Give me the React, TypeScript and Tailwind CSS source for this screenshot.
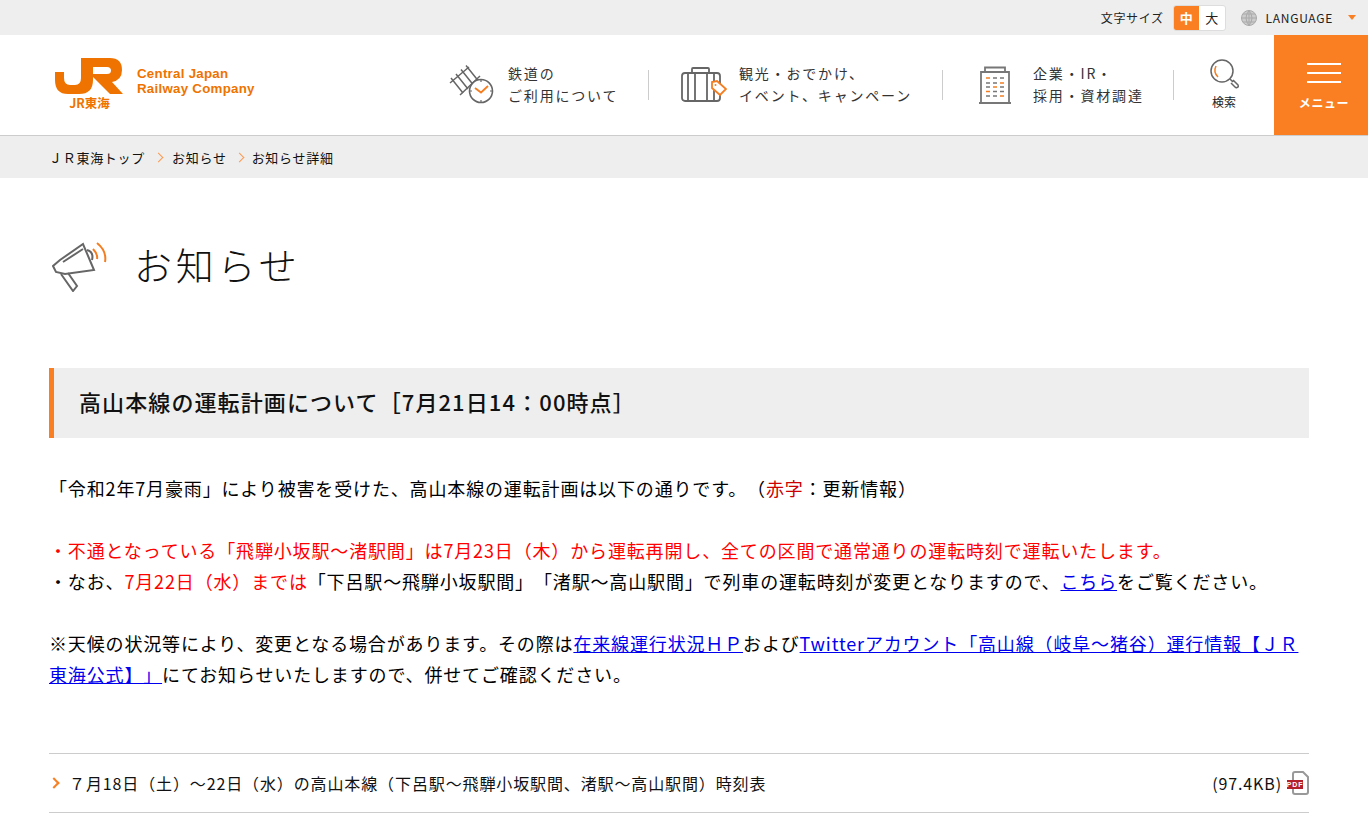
import React from 'react';

const TrainIcon = () => (
  <svg width="46" height="40" viewBox="0 0 46 40" fill="none" strokeWidth="1.5" stroke="#666">
    <path d="M1 18 L20 2 M11 30 L31 11" />
    <path d="M2 13 L14 28 M7 9 L19 24 M12 4.5 L24 19.5 M17 .5 L29 15.5" />
    <circle cx="32" cy="26" r="11.5" fill="#fff" strokeWidth="1.6" />
    <path d="M32 17 V15 M32 37 V35 M21 26 H23 M41 26 H43" strokeWidth="1.2" />
    <path d="M26 23 L32 27.5 L39 21" stroke="#f47d20" strokeWidth="1.8" />
  </svg>
);

const BagIcon = () => (
  <svg width="46" height="36" viewBox="0 0 46 36" fill="none" stroke="#666" strokeWidth="1.8">
    <path d="M11 6 V2 Q11 1 12 1 H27 Q28 1 28 2 V6" />
    <rect x="1" y="6" width="38" height="28" rx="3" />
    <path d="M7 6 V34 M14 6 V34 M26 6 V34 M33 6 V34" />
    <path d="M36 14 L45 22 L39 28 L31 21 L31 15 Z" fill="#fff" stroke="#f47d20" />
    <circle cx="34.5" cy="18" r="1" fill="#f47d20" stroke="none" />
  </svg>
);

const BuildingIcon = () => (
  <svg width="34" height="38" viewBox="0 0 34 38" fill="none">
    <path d="M7 6 V1.5 H27 V6 M3 37 V6 H31 V37 M1 37 H33" stroke="#777" strokeWidth="1.8" />
    <path d="M8 12 H12 M22 17 H26 M15 21 H19 M8 25.5 H12 M22 30 H26" stroke="#f47d20" strokeWidth="1.6" />
    <path d="M15 12 H19 M22 12 H26 M8 17 H12 M15 17 H19 M8 21 H12 M22 21 H26 M15 25.5 H19 M22 25.5 H26 M8 30 H12 M15 30 H19" stroke="#777" strokeWidth="1.6" />
  </svg>
);

const SearchIcon = () => (
  <svg width="30" height="30" viewBox="0 0 30 30" fill="none">
    <circle cx="12" cy="12" r="11" stroke="#666" strokeWidth="1.5" />
    <path d="M6 7 Q3 13 8 18" stroke="#f47d20" strokeWidth="1.5" />
    <path d="M20 20 L23 23 M23 21 L28 26 Q29 28 27 28.5 Q26 29 25 28 L21 24" stroke="#666" strokeWidth="1.5" />
  </svg>
);

const MegaphoneIcon = () => (
  <svg width="56" height="50" viewBox="0 0 56 50" fill="none" stroke="#666" strokeWidth="2">
    <path d="M1 24 L4 30 L13 32 L42 28 L31 2 L8 18 Z" fill="#fff" />
    <path d="M11 20 L31 7 M35 8 Q42 10 40 18" />
    <path d="M9 32 L21 49 L25 44 L16 31" />
    <path d="M41 7 Q46 12 45 17" stroke="#f47d20" />
    <path d="M45 1 Q55 9 53 20" stroke="#f47d20" />
  </svg>
);

const LogoMark = () => (
  <svg width="69" height="38" viewBox="0 0 69 38">
    <path
      fillRule="evenodd"
      fill="#ef7300"
      d="M26 0 H55 Q67 0 67 12 Q67 22 57 24 L68 36 H55 L38 19 V22 Q38 36 24 36 H13 Q0 36 0 22 V14 H9 V20 Q9 27 15 27 H20 Q26 27 26 20 Z M38 9 V16 H52 Q56 16 56 12.5 Q56 9 52 9 Z"
    />
  </svg>
);

const PdfIcon = () => (
  <svg width="22" height="24" viewBox="0 0 22 24" fill="none">
    <path d="M6 9 V3 Q6 1 8 1 H16 L21 6 V21 Q21 23 19 23 H8 Q6 23 6 21 V18" stroke="#999" strokeWidth="2" />
    <rect x="0" y="9" width="16" height="9" fill="#b3202a" />
    <text x="8" y="16" fontSize="7" fontWeight="700" fill="#fff" textAnchor="middle" fontFamily="Liberation Sans">PDF</text>
  </svg>
);

const navLabel = 'text-[14px] leading-[22px] tracking-[0.13em] text-[#333] -mt-[2px]';
const link = 'text-[#0000ee] underline';

const App: React.FC = () => {
  return (
    <div className="bg-white text-[#222] font-['Noto_Sans_CJK_JP','Noto_Sans',sans-serif] [text-spacing-trim:space-all] min-h-screen overflow-hidden">
      {/* top bar */}
      <div className="h-[35px] bg-[#eeeeee] flex items-center justify-end text-[12px] text-[#222]">
        <span className="tracking-[0.05em]">文字サイズ</span>
        <div className="ml-[9px] flex h-[26px] w-[53px] rounded-[3px] overflow-hidden border border-[#ddd] bg-white text-[13px]">
          <span className="flex-1 bg-[#fa7f22] text-white font-bold flex items-center justify-center">中</span>
          <span className="flex-1 flex items-center justify-center">大</span>
        </div>
        <svg className="ml-[15px]" width="16" height="16" viewBox="0 0 16 16" fill="none" stroke="#aaa">
          <circle cx="8" cy="8" r="7.5" fill="#ccc" />
          <path d="M0 8 H16 M8 0 V16 M2 4 H14 M2 12 H14 M8 .5 Q2 8 8 15.5 M8 .5 Q14 8 8 15.5" />
        </svg>
        <span className="ml-[9px] text-[12px] tracking-[0.06em]">LANGUAGE</span>
        <span className="ml-[15px] mr-[12px] w-0 h-0 border-x-[4px] border-x-transparent border-t-[5px] border-t-[#fa7f22]" />
      </div>

      {/* header */}
      <header className="h-[101px] flex items-center border-b border-[#ccc]">
        <a className="ml-[55px] flex items-start">
          <div className="flex flex-col items-center -mt-[4px]">
            <LogoMark />
            <span className="text-[12.5px] leading-[13px] font-bold text-[#ef7300]">JR東海</span>
          </div>
          <div className="ml-[13px] mt-[4px] font-['Liberation_Sans',sans-serif] font-bold text-[13.3px] leading-[15px] text-[#ef7300] tracking-[0.02em]">
            Central Japan<br />Railway Company
          </div>
        </a>

        <nav className="ml-auto flex items-center h-full">
          <div className="flex items-center w-[199px]">
            <TrainIcon />
            <p className={`ml-[13px] ${navLabel}`}>鉄道の<br />ご利用について</p>
          </div>
          <div className="w-px h-[30px] bg-[#ccc]" />
          <div className="flex items-center w-[293px] pl-[32px]">
            <BagIcon />
            <p className={`ml-[12px] ${navLabel}`}>観光・おでかけ、<br />イベント、キャンペーン</p>
          </div>
          <div className="w-px h-[30px] bg-[#ccc]" />
          <div className="flex items-center w-[230px] pl-[35px]">
            <BuildingIcon />
            <p className={`ml-[21px] ${navLabel}`}>企業・IR・<br />採用・資材調達</p>
          </div>
          <div className="w-px h-[30px] bg-[#ccc]" />
          <div className="w-[100px] flex flex-col items-center -mt-[2px]">
            <span className="ml-[2px]"><SearchIcon /></span>
            <span className="text-[12px] leading-[16px] mt-[5px]">検索</span>
          </div>
          <div className="w-[94px] h-full bg-[#fa7f22] text-white flex flex-col items-center justify-center pl-[6px] pt-[3px]">
            <span className="w-[34px] h-[2px] bg-white" />
            <span className="w-[34px] h-[2px] bg-white mt-[7px]" />
            <span className="w-[34px] h-[2px] bg-white mt-[7px]" />
            <span className="text-[12px] leading-[16px] font-bold mt-[12px] tracking-[0.05em]">メニュー</span>
          </div>
        </nav>
      </header>

      {/* breadcrumb */}
      <div className="h-[42px] bg-[#eeeeee] flex items-center pl-[49px] pt-[1px] text-[13px] tracking-[0.055em] text-[#111]">
        <span>ＪＲ東海トップ</span>
        <span className="mx-[10px] w-[7px] h-[7px] border-t border-r border-[#fa9a50] rotate-45" />
        <span>お知らせ</span>
        <span className="mx-[9px] w-[7px] h-[7px] border-t border-r border-[#fa9a50] rotate-45" />
        <span>お知らせ詳細</span>
      </div>

      <main className="px-[49px] w-[1358px]">
        <div className="flex items-center h-[50px] mt-[64px] pl-[3px]">
          <MegaphoneIcon />
          <h1 className="ml-[26px] -mt-[8px] text-[38px] font-light tracking-[0.1em] text-[#111]">お知らせ</h1>
        </div>

        <h2 className="mt-[76px] h-[70px] flex items-center bg-[#eeeeee] border-l-[5px] border-[#fa7f22] pl-[25px] pb-[3px] text-[22px] font-medium tracking-[0.05em] text-[#111]">
          高山本線の運転計画について［7月21日14：00時点］
        </h2>

        <div className="mt-[35px] text-[18px] leading-[31px] tracking-[0.85px] text-[#000]">
          <p>「令和2年7月豪雨」により被害を受けた、高山本線の運転計画は以下の通りです。（<span className="text-[#cc0000]">赤字</span>：更新情報）</p>
          <p className="mt-[31px] text-[#ff0000]">・不通となっている「飛騨小坂駅～渚駅間」は7月23日（木）から運転再開し、全ての区間で通常通りの運転時刻で運転いたします。</p>
          <p>・なお、<span className="text-[#ff0000]">7月22日（水）までは</span>「下呂駅～飛騨小坂駅間」「渚駅～高山駅間」で列車の運転時刻が変更となりますので、<a className={link}>こちら</a>をご覧ください。</p>
          <p className="mt-[31px]">※天候の状況等により、変更となる場合があります。その際は<a className={link}>在来線運行状況ＨＰ</a>および<a className={link}>Twitterアカウント「高山線（岐阜～猪谷）運行情報【ＪＲ東海公式】」</a>にてお知らせいたしますので、併せてご確認ください。</p>
        </div>

        <div className="mt-[63px] h-[60px] border-y border-[#ccc] flex items-center text-[16px] tracking-[0.055em] text-[#111]">
          <span className="ml-[1px] w-[8px] h-[8px] border-t-2 border-r-2 border-[#fa7f22] rotate-45" />
          <span className="ml-[11px]">７月18日（土）～22日（水）の高山本線（下呂駅～飛騨小坂駅間、渚駅～高山駅間）時刻表</span>
          <span className="ml-auto">(97.4KB)</span>
          <span className="ml-[5px]"><PdfIcon /></span>
        </div>
      </main>
    </div>
  );
};

export default App;
